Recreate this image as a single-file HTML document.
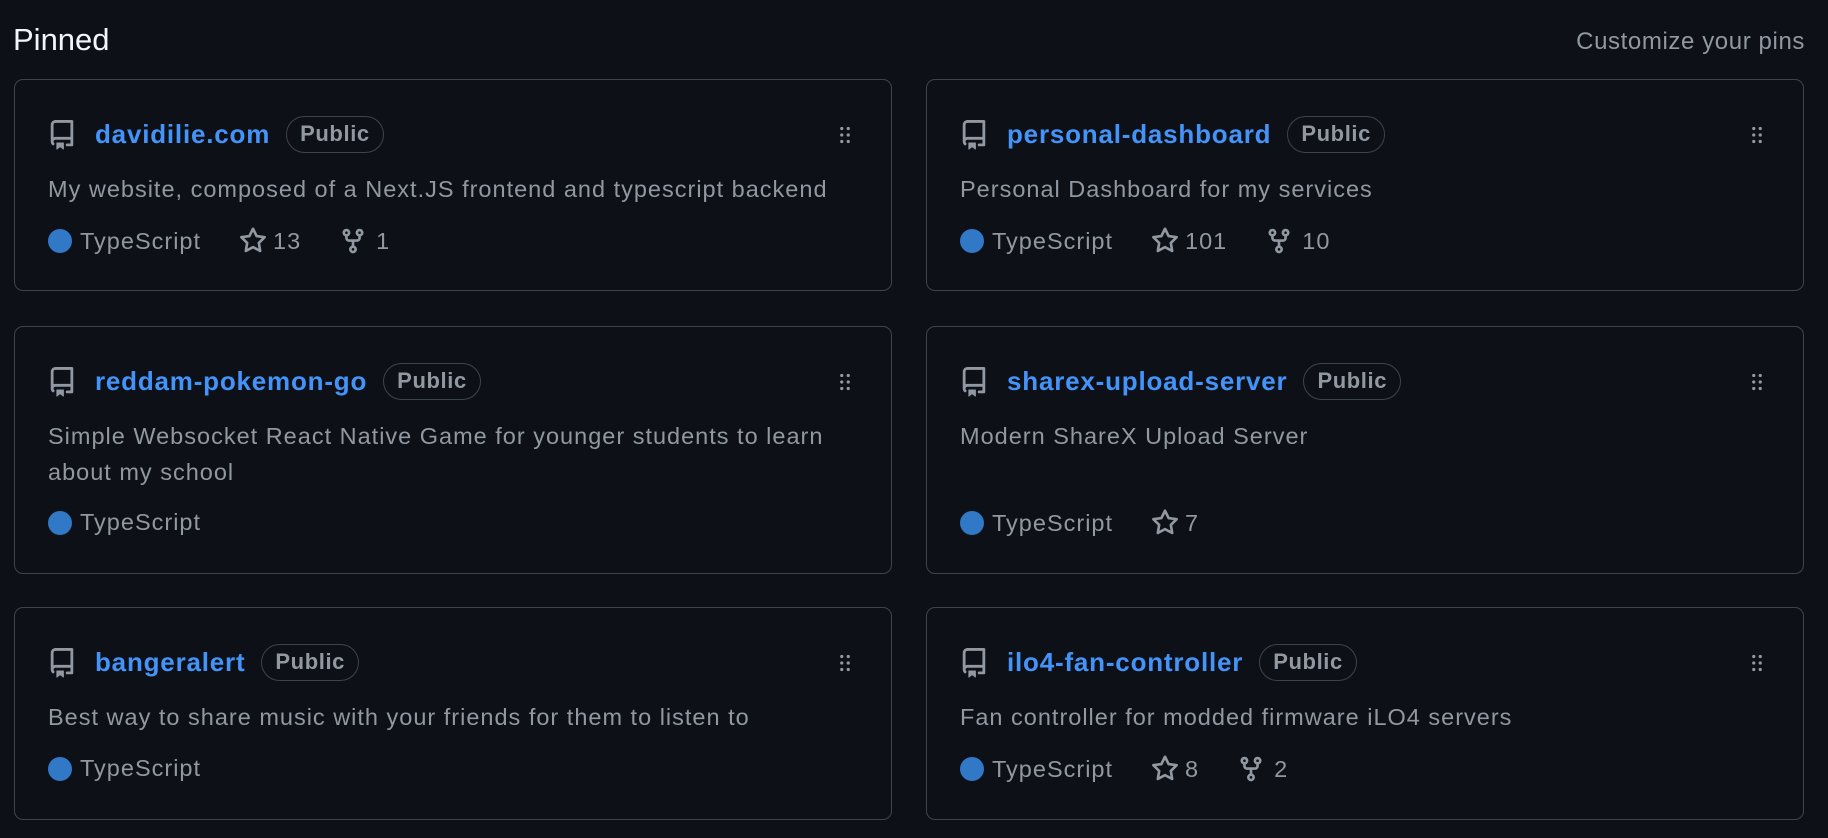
<!DOCTYPE html>
<html><head><meta charset="utf-8"><style>
*{box-sizing:border-box;margin:0;padding:0}
body{width:1828px;height:838px;background:#0d1117;font-family:"Liberation Sans",sans-serif;position:relative;overflow:hidden;color:#9198a1}
.h{position:absolute;left:13px;top:22px;font-size:31px;color:#f0f6fc}
.cust{position:absolute;right:23px;top:28px;font-size:24px;letter-spacing:0.6px;color:#9198a1}
.card{position:absolute;width:878px;border:1.5px solid #3d444d;border-radius:9px}
.abs{position:absolute}
.title{font-weight:bold;font-size:26px;letter-spacing:0.8px;color:#4493f8;white-space:nowrap}
.badge{border:1.5px solid #3d444d;border-radius:20px;height:37px;font-size:22px;letter-spacing:0.6px;line-height:34px;padding:0 13px;color:#9198a1;font-weight:bold}
.desc{font-size:23.5px;letter-spacing:1px;line-height:36px;color:#9198a1;width:820px}
.meta{font-size:23.5px;letter-spacing:1px;display:flex;align-items:center;white-space:nowrap}
.dot{width:24px;height:24px;border-radius:50%;background:#3178c6;display:inline-block;margin-right:8px}
</style></head><body>
<div class="h">Pinned</div>
<div class="cust">Customize your pins</div>

<svg width="0" height="0" style="position:absolute"><defs>
<symbol id="repo" viewBox="0 0 16 16"><path fill="#9198a1" d="M2 2.5A2.5 2.5 0 0 1 4.5 0h8.750a.75.75 0 0 1 .75.75v12.5a.75.75 0 0 1-.75.75h-2.5a.75.75 0 0 1 0-1.5h1.75v-2h-8a1 1 0 0 0-.714 1.7.75.75 0 1 1-1.072 1.05A2.495 2.495 0 0 1 2 11.5Zm10.5-1h-8a1 1 0 0 0-1 1v6.708A2.486 2.486 0 0 1 4.5 9h8ZM5 12.25a.25.25 0 0 1 .25-.25h3.5a.25.25 0 0 1 .25.25v3.25a.25.25 0 0 1-.4.2l-1.450-1.087a.249.249 0 0 0-.3 0L5.4 15.7a.25.25 0 0 1-.4-.2Z"/></symbol>
<symbol id="grip" viewBox="0 0 16 16"><path fill="#9198a1" d="M10 13a1 1 0 1 1 0-2 1 1 0 0 1 0 2Zm0-4a1 1 0 1 1 0-2 1 1 0 0 1 0 2Zm-4 4a1 1 0 1 1 0-2 1 1 0 0 1 0 2Zm5-9a1 1 0 1 1-2 0 1 1 0 0 1 2 0ZM7 8a1 1 0 1 1-2 0 1 1 0 0 1 2 0ZM6 5a1 1 0 1 1 0-2 1 1 0 0 1 0 2Z"/></symbol>
<symbol id="star" viewBox="0 0 16 16"><path fill="#9198a1" d="M8 .25a.75.75 0 0 1 .673.418l1.882 3.815 4.210.612a.75.75 0 0 1 .416 1.279l-3.046 2.970.719 4.192a.751.751 0 0 1-1.088.791L8 12.347l-3.766 1.980a.75.75 0 0 1-1.088-.79l.72-4.194L.818 6.374a.75.75 0 0 1 .416-1.28l4.210-.611L7.327.668A.75.75 0 0 1 8 .25Zm0 2.445L6.615 5.5a.75.75 0 0 1-.564.41l-3.097.45 2.240 2.184a.75.75 0 0 1 .216.664l-.528 3.084 2.769-1.456a.75.75 0 0 1 .698 0l2.770 1.456-.53-3.084a.75.75 0 0 1 .216-.664l2.240-2.183-3.096-.45a.75.75 0 0 1-.564-.41L8 2.694Z"/></symbol>
<symbol id="fork" viewBox="0 0 16 16"><path fill="#9198a1" d="M5 5.372v.878c0 .414.336.75.75.75h4.5a.75.75 0 0 0 .75-.75v-.878a2.25 2.25 0 1 1 1.5 0v.878a2.25 2.25 0 0 1-2.25 2.25h-1.5v2.128a2.251 2.251 0 1 1-1.5 0V8.5h-1.5A2.25 2.25 0 0 1 3.5 6.25v-.878a2.25 2.25 0 1 1 1.5 0ZM5 3.25a.75.75 0 1 0-1.5 0 .75.75 0 0 0 1.5 0Zm6.75.75a.75.75 0 1 0 0-1.5.75.75 0 0 0 0 1.5Zm-3 8.75a.75.75 0 1 0-1.5 0 .75.75 0 0 0 1.5 0Z"/></symbol>
</defs></svg>

<div class="card" style="left:14px;top:79px;height:212px">
 <svg class="abs" style="left:32px;top:40px" width="30" height="30"><use href="#repo"/></svg>
 <div class="abs" style="left:80px;top:36px;display:flex;align-items:center;gap:16px"><span class="title">davidilie.com</span><span class="badge">Public</span></div>
 <svg class="abs" style="left:817px;top:42px" width="26" height="26"><use href="#grip"/></svg>
 <div class="abs desc" style="left:33px;top:91px">My website, composed of a Next.JS frontend and typescript backend</div>
 <div class="abs meta" style="left:33px;top:147px"><span class="dot"></span>TypeScript
  <svg style="margin-left:38px;margin-right:6px" width="28" height="28"><use href="#star"/></svg>13
  <svg style="margin-left:38px;margin-right:9px" width="28" height="28"><use href="#fork"/></svg>1</div>
</div>

<div class="card" style="left:926px;top:79px;height:212px">
 <svg class="abs" style="left:32px;top:40px" width="30" height="30"><use href="#repo"/></svg>
 <div class="abs" style="left:80px;top:36px;display:flex;align-items:center;gap:16px"><span class="title">personal-dashboard</span><span class="badge">Public</span></div>
 <svg class="abs" style="left:817px;top:42px" width="26" height="26"><use href="#grip"/></svg>
 <div class="abs desc" style="left:33px;top:91px">Personal Dashboard for my services</div>
 <div class="abs meta" style="left:33px;top:147px"><span class="dot"></span>TypeScript
  <svg style="margin-left:38px;margin-right:6px" width="28" height="28"><use href="#star"/></svg>101
  <svg style="margin-left:38px;margin-right:9px" width="28" height="28"><use href="#fork"/></svg>10</div>
</div>

<div class="card" style="left:14px;top:326px;height:248px">
 <svg class="abs" style="left:32px;top:40px" width="30" height="30"><use href="#repo"/></svg>
 <div class="abs" style="left:80px;top:36px;display:flex;align-items:center;gap:16px"><span class="title">reddam-pokemon-go</span><span class="badge">Public</span></div>
 <svg class="abs" style="left:817px;top:42px" width="26" height="26"><use href="#grip"/></svg>
 <div class="abs desc" style="left:33px;top:91px">Simple Websocket React Native Game for younger students to learn<br>about my school</div>
 <div class="abs meta" style="left:33px;top:182px"><span class="dot"></span>TypeScript</div>
</div>

<div class="card" style="left:926px;top:326px;height:248px">
 <svg class="abs" style="left:32px;top:40px" width="30" height="30"><use href="#repo"/></svg>
 <div class="abs" style="left:80px;top:36px;display:flex;align-items:center;gap:16px"><span class="title">sharex-upload-server</span><span class="badge">Public</span></div>
 <svg class="abs" style="left:817px;top:42px" width="26" height="26"><use href="#grip"/></svg>
 <div class="abs desc" style="left:33px;top:91px">Modern ShareX Upload Server</div>
 <div class="abs meta" style="left:33px;top:182px"><span class="dot"></span>TypeScript
  <svg style="margin-left:38px;margin-right:6px" width="28" height="28"><use href="#star"/></svg>7</div>
</div>

<div class="card" style="left:14px;top:607px;height:213px">
 <svg class="abs" style="left:32px;top:40px" width="30" height="30"><use href="#repo"/></svg>
 <div class="abs" style="left:80px;top:36px;display:flex;align-items:center;gap:16px"><span class="title">bangeralert</span><span class="badge">Public</span></div>
 <svg class="abs" style="left:817px;top:42px" width="26" height="26"><use href="#grip"/></svg>
 <div class="abs desc" style="left:33px;top:91px">Best way to share music with your friends for them to listen to</div>
 <div class="abs meta" style="left:33px;top:147px"><span class="dot"></span>TypeScript</div>
</div>

<div class="card" style="left:926px;top:607px;height:213px">
 <svg class="abs" style="left:32px;top:40px" width="30" height="30"><use href="#repo"/></svg>
 <div class="abs" style="left:80px;top:36px;display:flex;align-items:center;gap:16px"><span class="title">ilo4-fan-controller</span><span class="badge">Public</span></div>
 <svg class="abs" style="left:817px;top:42px" width="26" height="26"><use href="#grip"/></svg>
 <div class="abs desc" style="left:33px;top:91px">Fan controller for modded firmware iLO4 servers</div>
 <div class="abs meta" style="left:33px;top:147px"><span class="dot"></span>TypeScript
  <svg style="margin-left:38px;margin-right:6px" width="28" height="28"><use href="#star"/></svg>8
  <svg style="margin-left:38px;margin-right:9px" width="28" height="28"><use href="#fork"/></svg>2</div>
</div>
</body></html>
